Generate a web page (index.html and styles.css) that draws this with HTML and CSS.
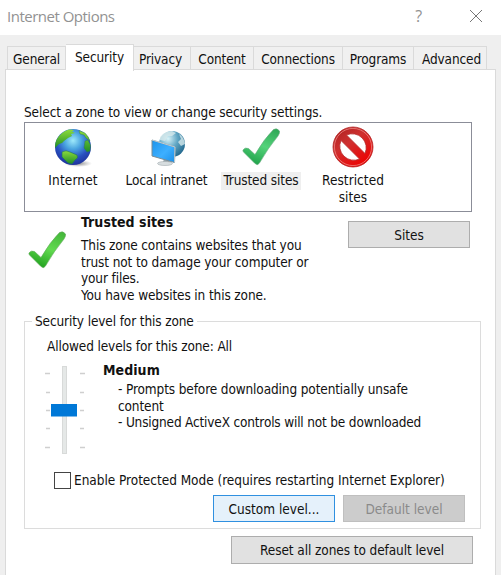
FILE: index.html
```html
<!DOCTYPE html>
<html lang="en">
<head>
<meta charset="utf-8">
<title>Internet Options</title>
<link rel="stylesheet" href="styles.css">
</head>
<body>
<header class="titlebar">
  <h1 class="title">Internet Options</h1>
  <span class="help">?</span>
  <svg class="close" width="14" height="14" viewBox="0 0 14 14"><path d="M1 1L13 13M13 1L1 13" stroke="#777" stroke-width="1" fill="none"/></svg>
</header>
<nav class="tabs">
  <span class="tab general">General</span>
  <span class="tab active">Security</span>
  <span class="tab privacy">Privacy</span>
  <span class="tab content">Content</span>
  <span class="tab connections">Connections</span>
  <span class="tab programs">Programs</span>
  <span class="tab advanced">Advanced</span>
</nav>
<main class="panel">
  <p class="prompt">Select a zone to view or change security settings.</p>
  <section class="zones">
    <div class="zone z1">
      <svg width="40" height="40" viewBox="0 -1 40 40">
        <defs>
          <radialGradient id="sea" cx=".5" cy=".32" r=".68"><stop offset="0" stop-color="#9ee9fa"/><stop offset=".35" stop-color="#4aa5e0"/><stop offset=".7" stop-color="#2850c0"/><stop offset="1" stop-color="#1f339c"/></radialGradient>
          <radialGradient id="shade"><stop offset="0" stop-color="#555" stop-opacity=".7"/><stop offset="1" stop-color="#777" stop-opacity="0"/></radialGradient>
          <linearGradient id="land" x1="0" y1="0" x2="0" y2="1"><stop offset="0" stop-color="#8cdb3c"/><stop offset="1" stop-color="#1f8d25"/></linearGradient>
        </defs>
        <ellipse cx="25" cy="35.500" rx="14" ry="3.500" fill="url(#shade)"/>
        <circle cx="20" cy="19" r="18" fill="url(#sea)"/>
        <path d="M4 11Q8 4 16 1.500L21 2L19 3.500L22 5L18 6L19 8L15 10L11 13L9 15L6 16L2 20Q2 14 4 11Z" fill="url(#land)"/>
        <path d="M9 24Q13 21.500 17 24L24 27Q26 30 22 32L19 36L15 35Q12 32 9 29Z" fill="url(#land)" stroke="#1d6d64" stroke-width=".6"/>
        <path d="M26 2.500L32 5Q36 9 37 13L33 10L31 7L27 6ZM32 13L35 12L37.500 17L37 23L34 24L31 20Z" fill="url(#land)" stroke="#25745a" stroke-width=".4"/>
      </svg>
      <span class="label l1">Internet</span>
    </div>
    <div class="zone z2">
      <svg width="40" height="40" viewBox="-1 -1 40 40">
        <defs>
          <radialGradient id="pale" cx=".35" cy=".3" r=".75"><stop offset="0" stop-color="#d8f3f8"/><stop offset=".5" stop-color="#5fa5c3"/><stop offset="1" stop-color="#24698e"/></radialGradient>
          <linearGradient id="screen" x1="0" y1="0" x2="1" y2="1"><stop offset="0" stop-color="#1c93ea"/><stop offset=".55" stop-color="#3dafff"/><stop offset="1" stop-color="#1b8fe7"/></linearGradient>
        </defs>
        <circle cx="24" cy="16" r="13" fill="url(#pale)"/>
        <path d="M12 9Q17 3 24 3L28 5L24 8L20 8L17 13L12 12ZM31 6Q36 9 37 16L33 18L30 14L33 11Z" fill="#d6e9eb" opacity=".8"/>
        <path d="M16 31L22 32L21 35L15 34Z" fill="#9aa7ac"/><ellipse cx="17" cy="35.500" rx="7.500" ry="2" fill="#d7dddf" stroke="#a5adb0" stroke-width=".6"/>
        <path d="M4 12L27 19L26.500 34.500L4 28Z" fill="url(#screen)" stroke="#7c8c94" stroke-width="1"/>
        <path d="M4 12L27 19L26.500 34.500" fill="none" stroke="#d0dde2" stroke-width=".8"/>
      </svg>
      <span class="label l2">Local intranet</span>
    </div>
    <div class="zone z3">
      <svg width="40" height="40" viewBox="0 0 40 40">
        <defs><linearGradient id="tick1" x1=".8" y1="0" x2=".4" y2="1"><stop offset="0" stop-color="#30a958"/><stop offset=".5" stop-color="#54d37a"/><stop offset="1" stop-color="#22a44c"/></linearGradient></defs>
        <path d="M2 23Q4 20 7.500 21.500L14 27.500Q23 12 32.500 2.500Q36 .5 38.500 4Q39 6 37 9Q27 21 18.500 36Q16.500 39 14 36.500Q8 30.500 3 25.500Q1.500 24 2 23Z" fill="url(#tick1)" stroke="#65a97c" stroke-width=".6"/>
      </svg>
      <span class="label l3">Trusted sites</span>
    </div>
    <div class="zone z4">
      <svg width="42" height="42" viewBox="0 0 42 42">
        <defs><linearGradient id="ban" x1="0" y1="0" x2=".7" y2="1"><stop offset="0" stop-color="#a91f20"/><stop offset=".45" stop-color="#cf302f"/><stop offset="1" stop-color="#ef0000"/></linearGradient></defs>
        <path fill-rule="evenodd" d="M21 1A20 20 0 1 1 21 41A20 20 0 1 1 21 1ZM14.500 9L33 27.500A14 14 0 0 0 14.500 9ZM9 14.500A14 14 0 0 0 27.500 33Z" fill="url(#ban)" stroke="#b52a2a" stroke-width=".8"/>
        <circle cx="21" cy="21" r="18.600" fill="none" stroke="#ef8b87" stroke-width="1" opacity=".75"/>
      </svg>
      <span class="label l4">Restricted<br>sites</span>
    </div>
  </section>
  <section class="detail">
    <svg class="tick" width="40" height="40" viewBox="0 0 40 40">
      <defs><linearGradient id="tick2" x1=".8" y1="0" x2=".4" y2="1"><stop offset="0" stop-color="#45b83b"/><stop offset=".5" stop-color="#62da50"/><stop offset="1" stop-color="#24a421"/></linearGradient></defs>
      <path d="M2 23Q4 20 7.500 21.500L14 27.500Q23 12 32.500 2.500Q36 .5 38.500 4Q39 6 37 9Q27 21 18.500 36Q16.500 39 14 36.500Q8 30.500 3 25.500Q1.500 24 2 23Z" fill="url(#tick2)" stroke="#61a85b" stroke-width=".6"/>
    </svg>
    <div class="about">
      <h2>Trusted sites</h2>
      <p class="a1">This zone contains websites that you</p>
      <p class="a2">trust not to damage your computer or</p>
      <p class="a3">your files.</p>
      <p class="a4">You have websites in this zone.</p>
    </div>
    <button class="sites">Sites</button>
  </section>
  <fieldset class="level">
    <legend>Security level for this zone</legend>
    <p class="allowed">Allowed levels for this zone: All</p>
    <div class="setting">
      <svg class="slider" width="40" height="90" viewBox="0 0 40 90">
        <path d="M0 8.500H5M35 8.500H40M1 27.500H5M35 27.500H39M1 45.500H5M35 45.500H39M1 63.500H5M35 63.500H39M0 82.500H5M35 82.500H40" stroke="#cfcfcf" stroke-width="1.300"/>
        <rect x="17.500" y="1.500" width="4" height="87" fill="#e5e8e7" stroke="#d8dad9"/>
        <rect x="6" y="39" width="26" height="12.500" fill="#0078d7"/>
      </svg>
      <div class="policy">
        <h2>Medium</h2>
        <p class="p1">- Prompts before downloading potentially unsafe</p>
        <p class="p2">content</p>
        <p class="p3">- Unsigned ActiveX controls will not be downloaded</p>
      </div>
    </div>
    <div class="protect"><span class="box"></span><span class="protect-text">Enable Protected Mode (requires restarting Internet Explorer)</span></div>
    <div class="actions">
      <button class="custom">Custom level...</button>
      <button class="default" disabled>Default level</button>
    </div>
  </fieldset>
  <button class="reset">Reset all zones to default level</button>
</main>
</body>
</html>
```
FILE: styles.css
```css
* { box-sizing: border-box; }
html, body { height: 100%; overflow: hidden; }
body { margin: 0; background: #efefef; color: #111; font: 13.5px/16.4px "DejaVu Sans Condensed", "DejaVu Sans", sans-serif; font-stretch: condensed; letter-spacing: -0.12px; display: flex; flex-direction: column; }
h1, h2, p { margin: 0; white-space: nowrap; }
h2 { font-size: 14px; line-height: 17px; letter-spacing: 0.05px; }
svg { display: block; flex: none; }
.titlebar { height: 35px; flex: none; background: #fff; display: flex; align-items: center; padding: 0 18px 3px 7px; color: #929292; }
.title { font: 15px/20px "Open Sans", sans-serif; letter-spacing: -0.5px; flex: 1; }
.help { font: 16px/20px "Open Sans", sans-serif; margin-right: 47px; }
.tabs { height: 35px; flex: none; padding: 9px 0 0 7px; display: flex; align-items: flex-end; }
.tab { height: 24px; flex: none; border: 1px solid #dadada; border-left-width: 0; border-bottom: 0; text-align: center; line-height: 24px; white-space: nowrap; background: #f0f0f0; }
.general { width: 59px; border-left-width: 1px; }
.active { width: 68px; height: 27px; background: #fff; position: relative; margin-bottom: -1px; }
.privacy { width: 57px; padding-right: 3px; }
.content { width: 63px; }
.connections { width: 89px; }
.programs { width: 71px; }
.advanced { width: 73px; padding-left: 3px; }
.panel { width: 491px; height: 530px; margin-left: 5px; background: #fff; border: 1px solid #dadada; padding: 34px 0 0 18px; display: flex; flex-direction: column; flex: none; margin-top: -1px; }
.prompt { letter-spacing: -0.09px; }
.zones { width: 448px; height: 90px; flex: none; margin-top: 2px; border: 1px solid #8b8d98; display: flex; }
.zone { display: flex; flex-direction: column; align-items: center; text-align: center; padding-top: 4px; }
.z1 { width: 96px; }
.z2 { width: 91px; }
.z3 { width: 98px; }
.z4 { width: 86px; padding-top: 3px; }
.label { margin-top: 5px; padding: 0 3px; white-space: nowrap; }
.l1 { letter-spacing: 0.15px; }
.z4 .label { margin-top: 4px; letter-spacing: 0.05px; }
.l3 { background: #efefef; height: 18px; }
.detail { display: flex; height: 101px; flex: none; width: 446px; padding-top: 2px; }
.tick { margin: 16px 0 0 3px; }
.about { margin-left: 14px; flex: 1; }
.about p:first-of-type { margin-top: 6px; }
button { font: inherit; letter-spacing: 0; color: #111; background: #e1e1e1; border: 1px solid #adadad; padding: 0; white-space: nowrap; }
.sites { width: 122px; height: 27px; margin-top: 7px; }
.level { margin: 0; padding: 0; border: 1px solid #dcdcdc; width: 457px; height: 216px; flex: none; min-width: 0; }
legend { margin-left: 7px; padding: 0 3px; }
.allowed { margin: 8px 0 0 22px; }
.setting { display: flex; height: 117px; padding: 8px 0 0 20px; }
.slider { margin-top: 3px; }
.policy { margin-left: 18px; }
.policy p { margin-left: 15px; }
.policy p:first-of-type { margin-top: 2px; }
.p3 { letter-spacing: -0.17px; }
.protect { display: flex; align-items: center; margin-left: 29px; height: 18px; white-space: nowrap; }
.protect-text { letter-spacing: -0.03px; }
.box { width: 17px; height: 17px; border: 1px solid #444; margin-right: 3px; flex: none; }
.actions { display: flex; gap: 8px; margin: 6px 0 0 188px; }
.actions button { width: 122px; height: 27px; }
.actions .custom { background: #e5f1fb; border-color: #3090e0; }
.actions .default { background: #ccc; border-color: #bfbfbf; color: #8a8a8a; }
.reset { width: 242px; height: 28px; margin: 7px 0 0 207px; flex: none; letter-spacing: -0.08px; }
```
